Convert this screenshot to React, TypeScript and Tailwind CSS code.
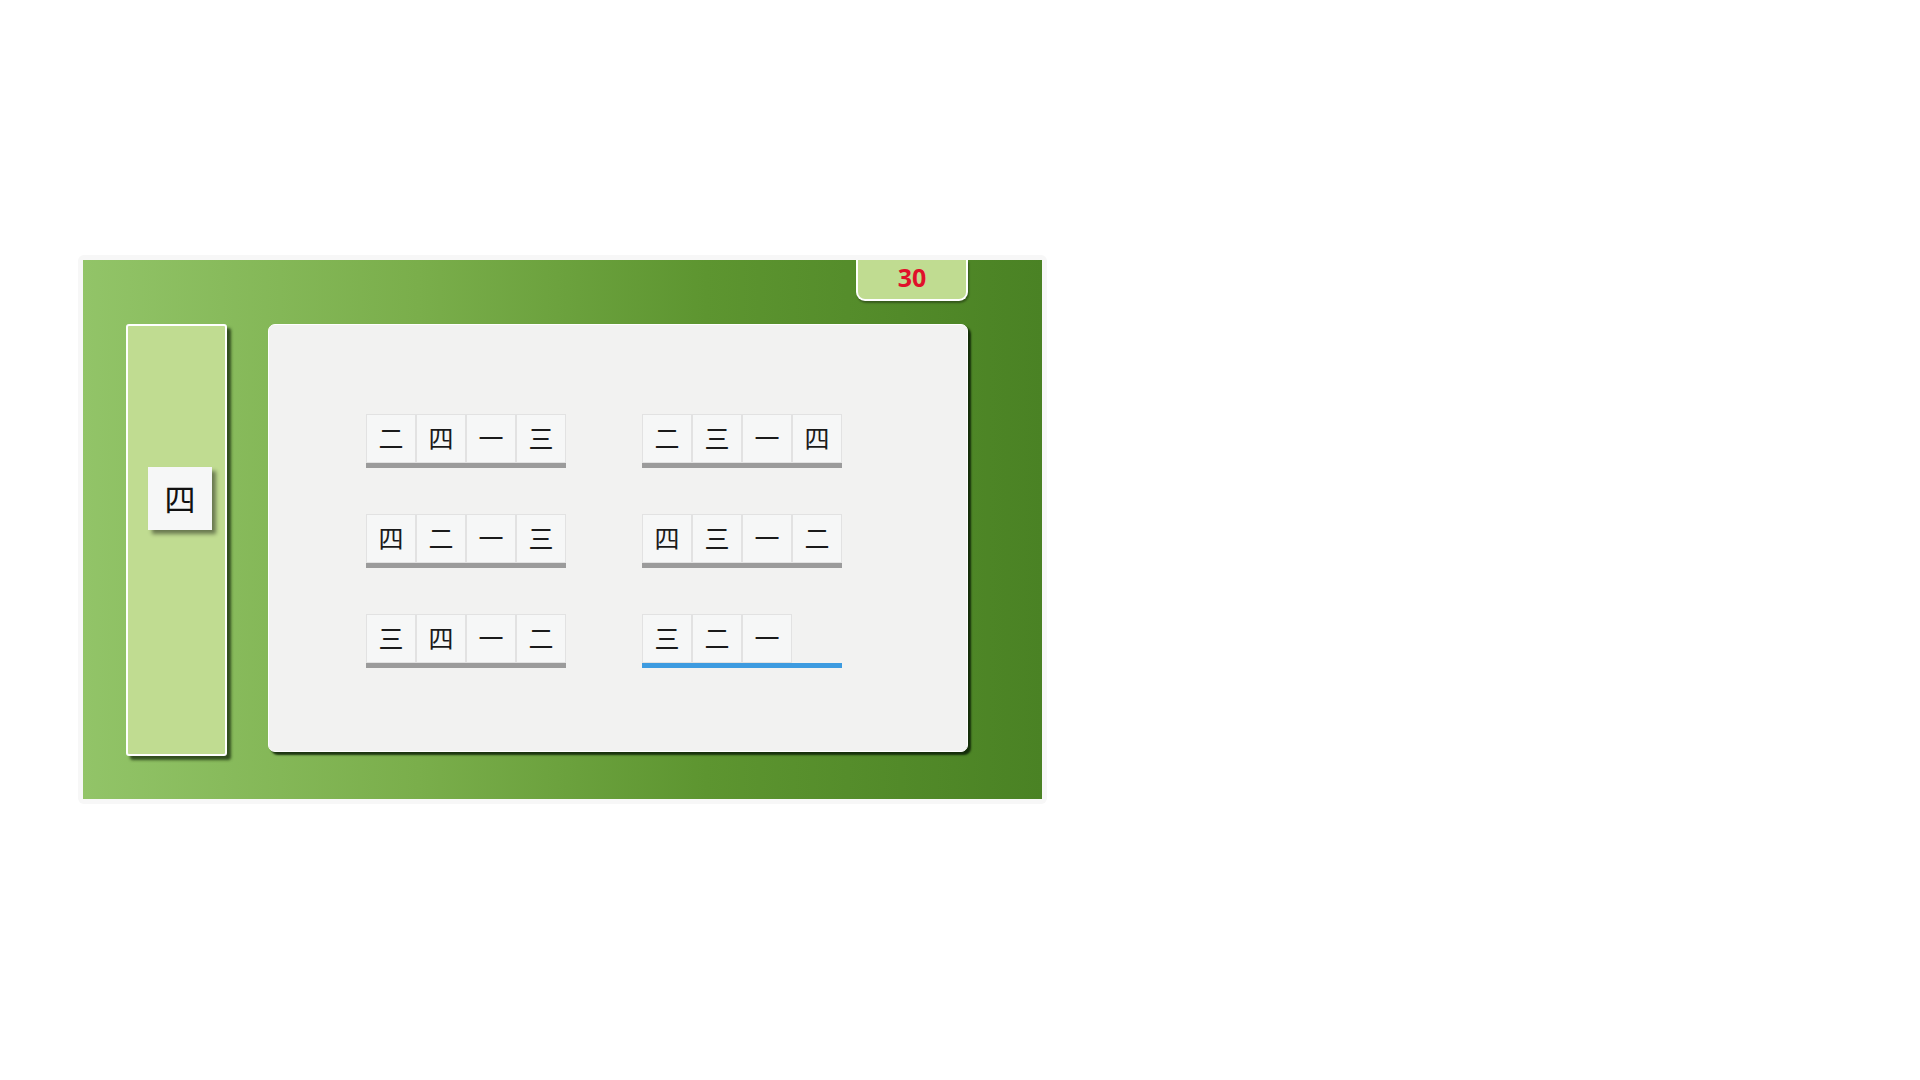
const rows: string[][] = [
  ["二", "四", "一", "三"],
  ["二", "三", "一", "四"],
  ["四", "二", "一", "三"],
  ["四", "三", "一", "二"],
  ["三", "四", "一", "二"],
  ["三", "二", "一"],
];

const cjk = { fontFamily: '"Noto Sans CJK SC", "Noto Sans", sans-serif' };

const Tile = ({ ch }: { ch: string }) => (
  <div
    className="w-[50px] h-[49px] flex items-center justify-center pb-[3px] bg-[#f6f7f7] border border-[#e2e2e2] text-[25px] text-[#1a1a1a] leading-none"
    style={cjk}
  >
    {ch}
  </div>
);

const Row = ({ chars, active }: { chars: string[]; active?: boolean }) => (
  <div className="w-[200px] flex flex-col">
    <div className="flex h-[49px]">
      {chars.map((c, i) => (
        <Tile key={i} ch={c} />
      ))}
    </div>
    <div className={active ? "h-[5px] bg-[#3d9be0]" : "h-[5px] bg-[#9b9b9b]"} />
  </div>
);

export default function App() {
  return (
    <div className="w-[1920px] h-[1080px] bg-white pt-[255px] pl-[78px]">
      <div className="w-[969px] p-[5px] bg-[#f7f7f7] rounded-md">
        <div className="relative w-[959px] h-[539px] bg-[linear-gradient(90deg,#92c468_0%,#7aae4b_35%,#5d9530_65%,#4a8224_100%)] flex pt-[64px] pl-[43px]">
          <div className="absolute left-[773px] top-0 w-[112px] h-[41px] bg-[#c0dc91] border-2 border-t-0 border-white rounded-b-[9px] flex justify-center pt-[5px] shadow-[1px_2px_2px_rgba(0,0,0,0.35)]">
            <span
              className="text-[#e0102a] text-[25px] font-bold leading-none"
              style={{ fontFamily: '"Open Sans", "Noto Sans", sans-serif' }}
            >
              30
            </span>
          </div>

          <div className="w-[101px] h-[432px] bg-[#c0dc91] border-2 border-white rounded-[3px] shadow-[4px_4px_3px_rgba(20,40,10,0.75)] pt-[141px] pl-[20px]">
            <div
              className="w-[64px] h-[63px] bg-[#f6f7f7] flex items-center justify-center pb-[3px] text-[31px] text-[#111] leading-none shadow-[4px_4px_4px_rgba(0,0,0,0.45)]"
              style={cjk}
            >
              四
            </div>
          </div>

          <div className="ml-[41px] w-[700px] h-[428px] bg-[#f2f2f1] border border-white rounded-[7px] shadow-[3px_3px_2px_rgba(10,30,5,0.85)] pt-[89px] pl-[97px]">
            <div className="grid grid-cols-[200px_200px] gap-x-[76px] gap-y-[46px]">
              {rows.map((r, i) => (
                <Row key={i} chars={r} active={i === rows.length - 1} />
              ))}
            </div>
          </div>
        </div>
      </div>
    </div>
  );
}
